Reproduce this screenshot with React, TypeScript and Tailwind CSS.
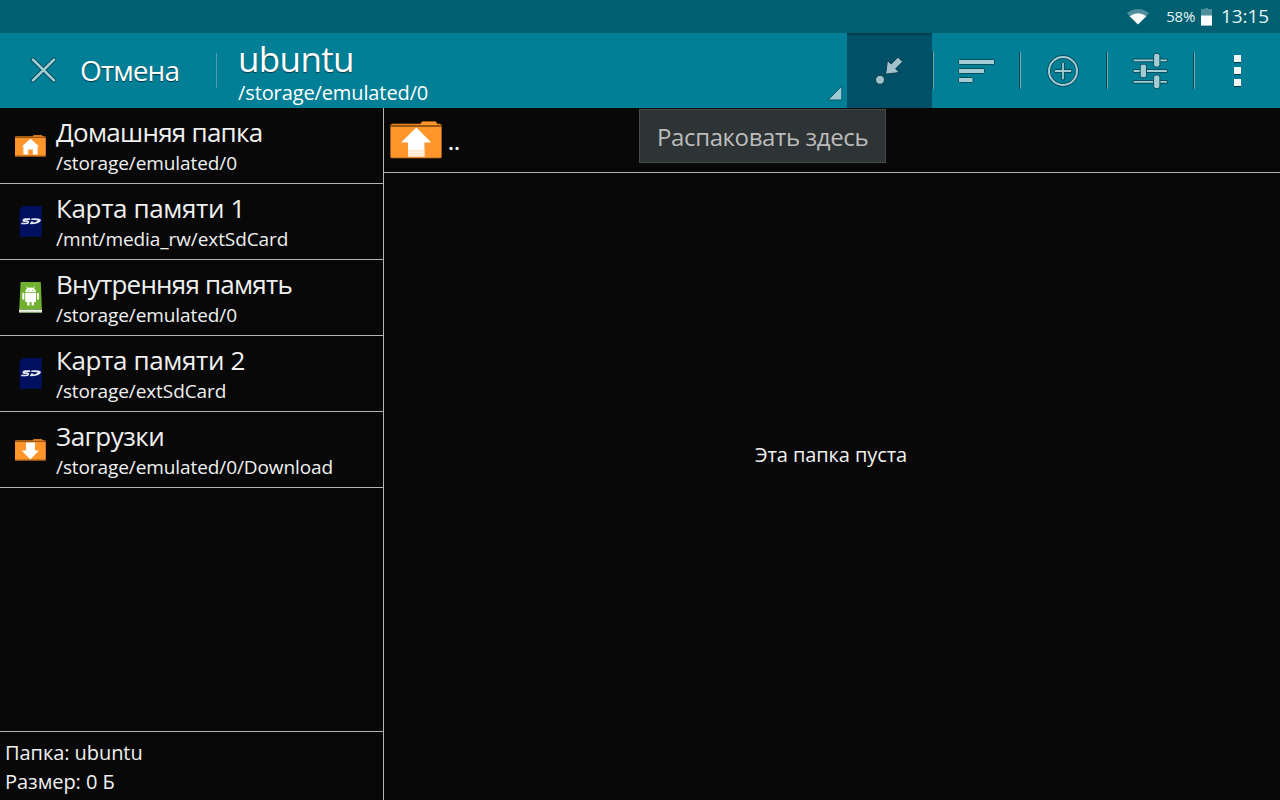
import type { ReactNode } from "react";

const TEAL_DARK = "#0a4f5e";
const PALE = "#a3ccd4";

function SmallFolder({ children }: { children: ReactNode }) {
  return (
    <svg width="32" height="32" viewBox="0 0 32 32">
      <path d="M1 7.4Q1 6.2 2.2 6.2H18.6L19.8 5H27.8L29 6.2H30.8Q31.6 6.3 31.6 7.4V26.4H1Z" fill="#d97a1c" />
      <path d="M1 8H31.6V25.6H1Z" fill="#ff952b" />
      <path d="M1 7.6H31.6" stroke="#92500f" strokeWidth="0.9" />
      <path d="M1 26H31.6" stroke="#b5651a" strokeWidth="0.9" />
      {children}
    </svg>
  );
}

function HomeIcon() {
  return (
    <SmallFolder>
      <path d="M16.5 8.8L25.2 16.6H23.6V24.6H18.8V19.6H14.2V24.6H9.4V16.6H7.8Z" fill="#fff" />
    </SmallFolder>
  );
}

function DownloadIcon() {
  return (
    <SmallFolder>
      <path d="M12 8.4H21V16.6H25L16.4 25.4L7.6 16.6H12Z" fill="#fff" />
    </SmallFolder>
  );
}

function SdIcon() {
  return (
    <svg width="32" height="32" viewBox="0 0 32 32">
      <path d="M9.2 0H27.8V30.8H5.6V3.4Z" fill="#00105f" />
      <path
        d="M16.2 13.2H11.4Q9.4 13.3 9.2 14.4Q9.2 15.2 10.8 15.2H13Q14.6 15.3 14.2 16.4Q13.8 17.4 12 17.5H7.2"
        fill="none"
        stroke="#e4e6f2"
        strokeWidth="1.7"
      />
      <path
        fillRule="evenodd"
        d="M17.6 12.5Q27 11.8 26.9 14.4Q26 17.9 15.8 18.2L17 15.6L19.6 15.4L19 16.6Q22.6 16.2 23.4 14.8Q23.6 13.8 19.4 13.9H17Z"
        fill="#e4e6f2"
      />
    </svg>
  );
}

function InternalIcon() {
  return (
    <svg width="32" height="32" viewBox="0 1 32 32">
      <path d="M6.6 1H26.8L27.9 28.6H5.2Z" fill="#6fb02f" />
      <path d="M5 28.6H28V31.5H5Z" fill="#eef4e8" />
      <path d="M5 31.2H28" stroke="#91b86c" strokeWidth="0.8" />
      <path d="M11.2 11.2Q11.6 6.4 16.6 6.4Q21.6 6.4 22 11.2Z" fill="#fff" />
      <path d="M12.7 5.4L14.2 8M20.5 5.4L19 8" stroke="#fff" strokeWidth="0.8" />
      <path d="M11.2 12H22V21H20V24.4H17.6V21H15.6V24.4H13.2V21H11.2Z" fill="#fff" />
      <path d="M9.3 12.8V17.8M23.9 12.8V17.8" stroke="#fff" strokeWidth="2" strokeLinecap="round" />
      <circle cx="14.5" cy="9.3" r=".6" fill="#6fb02f" />
      <circle cx="18.8" cy="9.3" r=".6" fill="#6fb02f" />
    </svg>
  );
}

const places = [
  { title: "Домашняя папка", path: "/storage/emulated/0", icon: <HomeIcon />, track: "tracking-[-0.73px]" },
  { title: "Карта памяти 1", path: "/mnt/media_rw/extSdCard", icon: <SdIcon />, track: "tracking-[-0.36px]" },
  { title: "Внутренняя память", path: "/storage/emulated/0", icon: <InternalIcon />, track: "tracking-[-0.77px]" },
  { title: "Карта памяти 2", path: "/storage/extSdCard", icon: <SdIcon />, track: "tracking-[-0.36px]" },
  { title: "Загрузки", path: "/storage/emulated/0/Download", icon: <DownloadIcon />, track: "tracking-[-0.5px]" },
];

function StatusBar() {
  return (
    <div className="flex h-[33px] shrink-0 items-center justify-end bg-[#005f70] pr-[11px] text-[#e6f3f5]">
      <svg width="24" height="18" viewBox="0 0 24 18" className="mr-[16px]">
        <path d="M1 5Q12-3 23 5L20.2 8.6Q12 2.8 3.8 8.6Z" fill="#4f8f9b" />
        <path d="M3.6 8.2Q12 2.4 20.4 8.2L12 16.4Z" fill="#fff" />
      </svg>
      <span className="mr-[6px] text-[15px] leading-[33px] tracking-[-0.25px]">58%</span>
      <svg width="11" height="18" viewBox="0 0 11 18" className="mr-[9px]">
        <path d="M4 0H7V1H11V8H0V1H4Z" fill="#4f8f9b" />
        <path d="M0 7.5H11V17.6H0Z" fill="#fff" />
      </svg>
      <span className="text-[19px] leading-[33px] tracking-[-0.1px]">13:15</span>
    </div>
  );
}

function Separator() {
  return <div className="h-[37px] w-[2px] shrink-0 border-l border-r border-l-[#07464f] border-r-[#6fabb5]" />;
}

function Outlined({ d, width }: { d: string; width: number }) {
  return (
    <>
      <path d={d} fill="none" stroke={TEAL_DARK} strokeWidth={width + 2} strokeLinecap="round" />
      <path d={d} fill="none" stroke={PALE} strokeWidth={width} strokeLinecap="round" />
    </>
  );
}

function Toolbar() {
  return (
    <div className="flex h-[75px] shrink-0 items-center bg-[#007f96] text-white">
      <button className="flex h-full w-[216px] items-center pl-[29px]">
        <svg width="28" height="28" viewBox="0 0 28 28" className="mr-[23px] mb-[2px]">
          <Outlined d="M4 3.6L25 24.4M25 3.6L4 24.4" width={2.6} />
        </svg>
        <span className="text-[28px] leading-[75px] tracking-[-0.9px] [text-shadow:0_1px_1px_#003844]">Отмена</span>
      </button>
      <div className="h-[35px] w-px bg-[#4f9fad]" />
      <div className="relative h-full w-[630px] pt-px pl-[20px]">
        <div className="pl-px text-[35px] leading-[50px] tracking-[-0.65px] [text-shadow:0_1px_1px_#003844]">ubuntu</div>
        <div className="pl-px text-[20px] leading-[18px] tracking-[-0.11px]">/storage/emulated/0</div>
        <svg width="16" height="16" viewBox="0 0 16 16" className="absolute right-[4px] bottom-[7px]">
          <path d="M14.8 1V15H1.2Z" fill="#9ccbd4" stroke="#0a5c6c" strokeWidth="1" />
        </svg>
      </div>
      <button className="flex h-full w-[85px] items-center justify-center border-t-2 border-[#003f50] bg-[#005068] pr-[2px]">
        <svg width="30" height="30" viewBox="0 0 30 30" className="-mt-px">
          <circle cx="6" cy="23.8" r="4.5" fill="#a3c1ca" stroke="#063c4b" />
          <path d="M24 1.2L28.6 5.8L21.6 12.8L25.4 16.5L11.6 18.2L13.4 4.4L17.2 8Z" fill="#a3c1ca" stroke="#063c4b" strokeLinejoin="round" />
        </svg>
      </button>
      <Separator />
      <button className="flex h-full w-[85px] items-center justify-center">
        <svg width="38" height="26" viewBox="0 0 38 26">
          <g fill={PALE} stroke={TEAL_DARK}>
            <rect x=".5" y="1.5" width="36" height="5" rx="1.2" />
            <rect x=".5" y="10.5" width="26" height="5" rx="1.2" />
            <rect x=".5" y="19.5" width="14.5" height="5" rx="1.2" />
          </g>
        </svg>
      </button>
      <Separator />
      <button className="flex h-full w-[85px] items-center justify-center pr-[1px]">
        <svg width="32" height="32" viewBox="0 0 32 32">
          <circle cx="16" cy="16" r="14" fill="none" stroke={TEAL_DARK} strokeWidth="3.8" />
          <circle cx="16" cy="16" r="14" fill="none" stroke={PALE} strokeWidth="2" />
          <Outlined d="M8.5 16H23.5M16 8.5V23.5" width={1.8} />
        </svg>
      </button>
      <Separator />
      <button className="flex h-full w-[85px] items-center justify-center pr-[2px]">
        <svg width="38" height="38" viewBox="0 0 38 38">
          <Outlined d="M3.3 8.3H35.2M3.3 19H35.2M3.3 29.8H35.2" width={1.8} />
          <g fill={PALE} stroke={TEAL_DARK}>
            <rect x="22.6" y="1.5" width="6.3" height="13.5" rx="2.2" />
            <rect x="9.2" y="12.2" width="6.3" height="13.5" rx="2.2" />
            <rect x="22.6" y="23" width="6.3" height="13.5" rx="2.2" />
          </g>
        </svg>
      </button>
      <Separator />
      <button className="flex h-full w-[85px] flex-col items-center justify-center gap-[5px]">
        <span className="size-[7px] bg-[#f4f4f4] shadow-[0_1px_0_#00343f]" />
        <span className="size-[7px] bg-[#f4f4f4] shadow-[0_1px_0_#00343f]" />
        <span className="size-[7px] bg-[#f4f4f4] shadow-[0_1px_0_#00343f]" />
      </button>
    </div>
  );
}

export default function App() {
  return (
    <div className="flex h-[800px] w-[1280px] flex-col overflow-hidden bg-[#080808] font-['Open_Sans','Noto_Sans',sans-serif] text-[#f0f0f0]">
      <StatusBar />
      <Toolbar />
      <div className="flex min-h-0 flex-1">
        <aside className="flex w-[384px] shrink-0 flex-col border-r border-[#b4b4b4]">
          {places.map((p) => (
            <div key={p.title} className="flex h-[76px] shrink-0 border-b border-[#b4b4b4]">
              <div className="w-[56px] shrink-0 pt-[22px] pl-[14px]">{p.icon}</div>
              <div className="pt-[6px]">
                <div className={`text-[26px] leading-[36px] whitespace-nowrap ${p.track}`}>{p.title}</div>
                <div className="pt-px text-[19px] leading-[25px] tracking-[-0.09px]">{p.path}</div>
              </div>
            </div>
          ))}
          <div className="mt-auto h-[69px] border-t border-[#b4b4b4] pt-[6px] pl-[5px] text-[20px] leading-[29px] tracking-[-0.06px]">
            <div>Папка: ubuntu</div>
            <div>Размер: 0 Б</div>
          </div>
        </aside>
        <main className="relative flex flex-1 flex-col">
          <div className="flex h-[65px] shrink-0 items-center border-b border-[#b4b4b4] pl-[6px]">
            <svg width="52" height="38" viewBox="0 0 52 38">
              <path d="M.5 5Q.6 2.9 2.4 2.9H30.4L32.2 .4H45.6L47.4 2.9H49.6Q51.5 3 51.5 5V36Q51.5 37 50 37H2Q.5 37 .5 36Z" fill="#ff952b" stroke="#a85d14" strokeWidth=".7" />
              <path d="M.5 5H51.5" stroke="#75400c" strokeWidth="1.3" />
              <path d="M26.3 6.5L41.3 21.6H34.4V35.6H18V21.6H11Z" fill="#fff" />
              <path d="M18 28.8H34.4V35.6H18Z" fill="#ffe8d2" />
              <path d="M18 31.2H34.4M18 33.6H34.4" stroke="#fff4e9" strokeWidth=".9" />
            </svg>
            <span className="pt-px pl-[6px] text-[22px] leading-[30px] font-semibold">..</span>
          </div>
          <div className="flex flex-1 items-center justify-center pr-[2px] pb-[63px] text-[20px] leading-[28px] tracking-[-0.09px]">
            Эта папка пуста
          </div>
          <div className="absolute top-px left-[255px] h-[54px] w-[247px] border border-[#464c4e] bg-[#2e3335] pl-[17px] text-[24px] leading-[54px] tracking-[-0.38px] whitespace-nowrap text-[#bcbcbc]">
            Распаковать здесь
          </div>
        </main>
      </div>
    </div>
  );
}
